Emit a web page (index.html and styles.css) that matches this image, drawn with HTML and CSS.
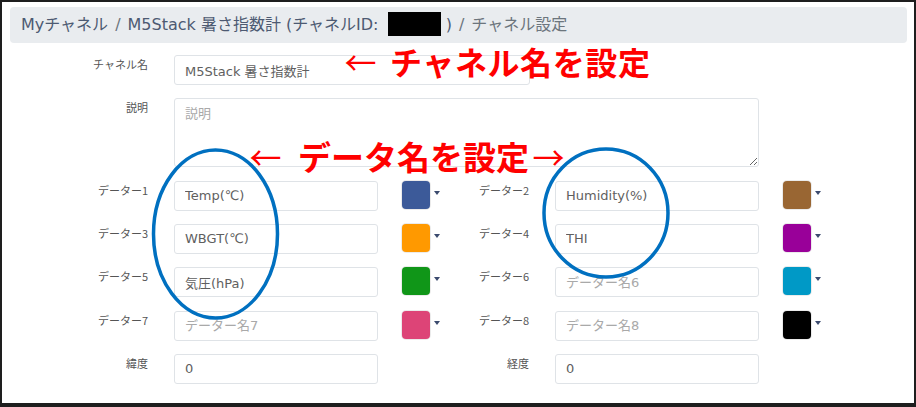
FILE: index.html
```html
<!DOCTYPE html>
<html lang="ja">
<head>
<meta charset="utf-8">
<title>チャネル設定</title>
<link rel="stylesheet" href="styles.css">
</head>
<body>
<div class="frame">
  <nav class="crumb">
    <span class="crumb-link">Myチャネル</span><span class="sep">/</span><span class="crumb-link">M5Stack 暑さ指数計 (チャネルID: <span class="redact"></span> )</span><span class="sep">/</span><span class="crumb-current">チャネル設定</span>
  </nav>

  <form class="form">
    <label class="lbl lbl-l">チャネル名</label>
    <input class="field field-name" type="text" value="M5Stack 暑さ指数計">

    <label class="lbl lbl-l">説明</label>
    <textarea class="field field-desc" placeholder="説明"></textarea>

    <label class="lbl lbl-l">データー1</label>
    <input class="field" type="text" value="Temp(℃)">
    <div class="sw-cell"><span class="swatch c1"></span><span class="caret"></span></div>
    <label class="lbl lbl-r">データー2</label>
    <input class="field" type="text" value="Humidity(%)">
    <div class="sw-cell"><span class="swatch c2"></span><span class="caret"></span></div>

    <label class="lbl lbl-l">データー3</label>
    <input class="field" type="text" value="WBGT(℃)">
    <div class="sw-cell"><span class="swatch c3"></span><span class="caret"></span></div>
    <label class="lbl lbl-r">データー4</label>
    <input class="field" type="text" value="THI">
    <div class="sw-cell"><span class="swatch c4"></span><span class="caret"></span></div>

    <label class="lbl lbl-l">データー5</label>
    <input class="field" type="text" value="気圧(hPa)">
    <div class="sw-cell"><span class="swatch c5"></span><span class="caret"></span></div>
    <label class="lbl lbl-r">データー6</label>
    <input class="field" type="text" placeholder="データー名6">
    <div class="sw-cell"><span class="swatch c6"></span><span class="caret"></span></div>

    <label class="lbl lbl-l">データー7</label>
    <input class="field" type="text" placeholder="データー名7">
    <div class="sw-cell"><span class="swatch c7"></span><span class="caret"></span></div>
    <label class="lbl lbl-r">データー8</label>
    <input class="field" type="text" placeholder="データー名8">
    <div class="sw-cell"><span class="swatch c8"></span><span class="caret"></span></div>

    <label class="lbl lbl-l">緯度</label>
    <input class="field" type="text" value="0">
    <label class="lbl lbl-r">経度</label>
    <input class="field" type="text" value="0">
  </form>

  <svg class="rings" width="916" height="407" viewBox="0 0 916 407">
    <ellipse cx="215.5" cy="234" rx="62" ry="84" />
    <ellipse cx="606" cy="213" rx="62" ry="64" />
  </svg>

  <div class="note note-name"><span class="arrow">←</span><span class="note-text">チャネル名を設定</span></div>
  <div class="note note-data"><span class="arrow">←</span><span class="note-text">データ名を設定</span><span class="arrow arrow-r">→</span></div>
</div>
</body>
</html>
```

FILE: styles.css
```css
* { box-sizing: border-box; }

html, body {
  margin: 0;
  padding: 0;
  background: #ffffff;
}

body {
  font-family: "Noto Sans", "Noto Sans CJK JP", sans-serif;
}

.frame {
  position: relative;
  width: 916px;
  height: 407px;
  border: 2px solid #1e1e1e;
  border-bottom-width: 4px;
  background: #ffffff;
  overflow: hidden;
}

.crumb {
  margin: 5px 7px 0 8px;
  height: 36px;
  line-height: 36px;
  padding-left: 11px;
  background: #e9ecef;
  border-radius: 4px;
  font-family: "DejaVu Sans", "Noto Sans CJK JP", sans-serif;
  font-size: 16px;
  color: #4d5a72;
  white-space: nowrap;
}

.crumb .sep {
  margin: 0 7px;
  color: #6c757d;
}

.crumb-current {
  color: #6c757d;
}

.redact {
  display: inline-block;
  width: 53px;
  height: 24px;
  background: #000;
  vertical-align: -6px;
  margin-left: 4px;
}

.form {
  display: grid;
  grid-template-columns: 172px 204px 82px 95px 204px 1fr;
  row-gap: 13.33px;
  margin: 12px 0 0 0;
}

.lbl {
  padding-right: 26px;
  text-align: right;
  font-size: 11px;
  line-height: 18px;
  color: #555555;
  align-self: start;
  font-family: "Noto Sans CJK JP", "Noto Sans", sans-serif;
}

.lbl-l { grid-column: 1; }
.lbl-r { grid-column: 4; }

.field {
  height: 30px;
  margin: 0;
  padding: 0 10px;
  border: 1px solid #dfe3e7;
  border-radius: 3px;
  font-family: "DejaVu Sans", "Noto Sans CJK JP", sans-serif;
  font-size: 13px;
  color: #5f5f5f;
  background: #fff;
  outline: none;
  width: 100%;
}

.field::placeholder {
  color: #a9a9a9;
}

.field-name {
  grid-column: 2 / span 3;
  width: 356px;
}

.field-desc {
  grid-column: 2 / span 4;
  height: 69px;
  padding: 5px 10px;
  line-height: 20px;
  resize: vertical;
}

.sw-cell {
  display: flex;
  align-items: flex-start;
  padding-left: 24px;
  height: 30px;
}

.swatch {
  display: block;
  width: 28px;
  height: 28px;
  border-radius: 4px;
  box-shadow: 0 0 0 1px rgba(0, 0, 0, 0.08);
}

.caret {
  display: block;
  width: 0;
  height: 0;
  margin: 10px 0 0 4px;
  border-left: 3px solid transparent;
  border-right: 3px solid transparent;
  border-top: 4px solid #3b4a6e;
}

.c1 { background: #3c5a99; }
.c2 { background: #996633; }
.c3 { background: #ff9900; }
.c4 { background: #990099; }
.c5 { background: #109618; }
.c6 { background: #0099c6; }
.c7 { background: #dd4477; }
.c8 { background: #000000; }

/* overlays */
.rings {
  position: absolute;
  left: -2px;
  top: -2px;
  pointer-events: none;
}

.rings ellipse {
  fill: none;
  stroke: #0070c0;
  stroke-width: 3.5;
}

.note {
  position: absolute;
  display: flex;
  align-items: center;
  color: #ff0000;
  font-family: "Noto Sans CJK JP", sans-serif;
  white-space: nowrap;
  line-height: 40px;
}

.note .arrow {
  font-size: 32px;
  font-weight: 400;
  display: inline-block;
  width: 35px;
  text-align: center;
}

.note-text {
  font-size: 32px;
  font-weight: 700;
}

.note-name {
  left: 341px;
  top: 39px;
}

.note-name .note-text {
  letter-spacing: 0.6px;
}

.note-name .arrow { margin-right: 12px; }

.note-data {
  left: 246px;
  top: 134px;
}

.note-data .note-text {
  font-size: 33px;
  margin-left: 15px;
}

.note-data .arrow-r {
  margin-left: 2px;
}
```
